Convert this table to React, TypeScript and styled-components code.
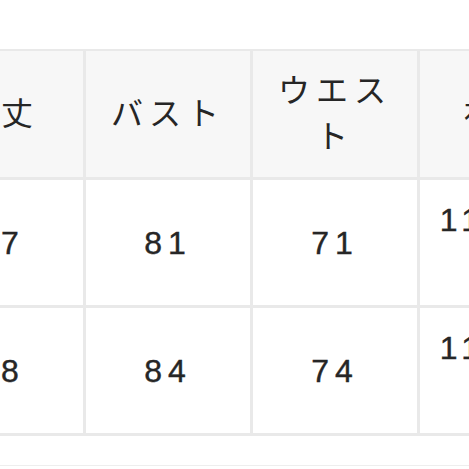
import styled, { createGlobalStyle } from 'styled-components';

const GlobalStyle = createGlobalStyle`
  html, body {
    margin: 0;
    padding: 0;
    background: #fff;
    overflow: hidden;
  }
`;

const Page = styled.div`
  width: 469px;
  height: 469px;
  overflow: hidden;
  padding-top: 49px;
  box-sizing: border-box;
  font-family: "Liberation Sans", "Noto Sans CJK JP", sans-serif;
  color: #262626;
`;

const SizeTable = styled.div`
  display: grid;
  grid-template-columns: repeat(4, 164px);
  gap: 3px;
  padding: 2px 0 3px;
  margin-left: -81px;
  width: 760px;
  background: #e9e9e9;
`;

const Cell = styled.div<{ $head?: boolean }>`
  display: flex;
  align-items: center;
  justify-content: center;
  box-sizing: border-box;
  min-height: ${(p) => (p.$head ? '126px' : '125px')};
  padding: 0 12px;
  background: ${(p) => (p.$head ? '#f7f7f7' : '#fff')};
  font-size: 32px;
  line-height: 46px;
  letter-spacing: 6px;
  text-align: center;
  white-space: pre-line;
  -webkit-text-stroke: ${(p) => (p.$head ? '0' : '0.4px')};
`;

const Divider = styled.div`
  margin-top: 29px;
  height: 1px;
  background: #eeeeee;
`;

const headers = ['着丈', 'バスト', 'ウエスト', '袖丈'];
const rows = [
  ['67', '81', '71', '117.5-\ncm'],
  ['68', '84', '74', '118.5-\ncm'],
];

export default function App() {
  return (
    <>
      <GlobalStyle />
      <Page>
        <SizeTable>
          {headers.map((h) => (
            <Cell key={h} $head>
              {h}
            </Cell>
          ))}
          {rows.map((row, i) =>
            row.map((v, j) => <Cell key={`${i}-${j}`}>{v}</Cell>)
          )}
        </SizeTable>
        <Divider />
      </Page>
    </>
  );
}
